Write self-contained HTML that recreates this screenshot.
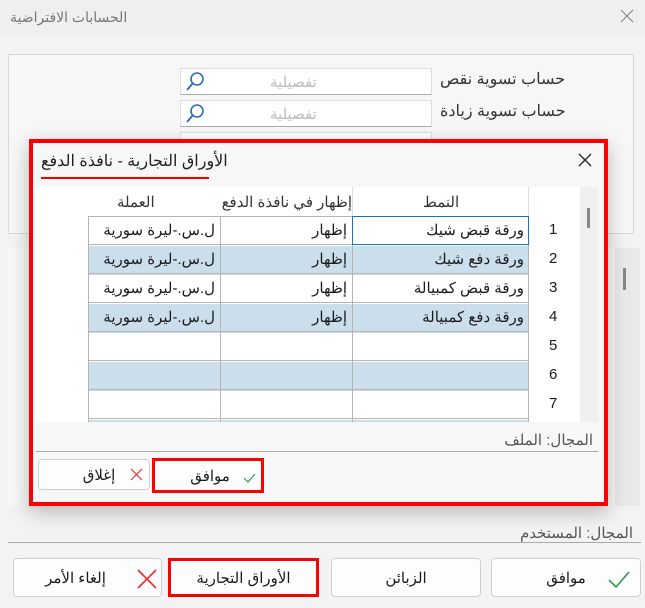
<!DOCTYPE html>
<html><head><meta charset="utf-8"><style>
*{box-sizing:border-box;margin:0;padding:0}
body{width:645px;height:608px;overflow:hidden;background:#f3f3f3;font-family:"Liberation Sans","Noto Sans CJK SC",sans-serif;position:relative;font-size:15px;color:#1a1a1a}
.a{position:absolute}
.t{direction:rtl;white-space:nowrap}
.btn{position:absolute;background:#fdfdfd;border:1px solid #cfcfcf;border-radius:4px;display:flex;align-items:center;justify-content:center;font-size:15px;direction:rtl}
</style></head><body>
<div class="a" style="left:0;top:0;width:645px;height:36px;background:#efefef"></div>
<div class="a t" style="left:10px;top:9px;font-size:14px;color:#777">الحسابات الافتراضية</div>
<svg class="a" style="left:620px;top:9px" width="14" height="14"><path d="M1 1L13 13M13 1L1 13" stroke="#888" stroke-width="1.2"/></svg>
<div class="a" style="left:8px;top:54px;width:626px;height:180px;border:1px solid #d8d8d8;background:#f7f7f7"></div>
<div class="a t" style="left:440px;top:69px;font-size:16px;color:#333">حساب تسوية نقص</div>
<div class="a t" style="left:440px;top:101px;font-size:16px;color:#333">حساب تسوية زيادة</div>
<div class="a" style="left:180px;top:68px;width:252px;height:27px;background:#fff;border:1px solid #ddd;border-bottom-color:#aaa"></div>
<div class="a" style="left:180px;top:100px;width:252px;height:27px;background:#fff;border:1px solid #ddd;border-bottom-color:#aaa"></div>
<div class="a" style="left:180px;top:132px;width:252px;height:10px;background:#fff;border:1px solid #ddd"></div>
<div class="a t" style="left:270px;top:73px;color:#bbb">تفصيلية</div>
<div class="a t" style="left:270px;top:105px;color:#bbb">تفصيلية</div>
<svg class="a" style="left:185px;top:71px" width="22" height="22"><circle cx="12" cy="8" r="6" fill="none" stroke="#2a6fb5" stroke-width="1.6"/><path d="M8 12L2 19" stroke="#2a6fb5" stroke-width="1.8"/></svg>
<svg class="a" style="left:185px;top:103px" width="22" height="22"><circle cx="12" cy="8" r="6" fill="none" stroke="#2a6fb5" stroke-width="1.6"/><path d="M8 12L2 19" stroke="#2a6fb5" stroke-width="1.8"/></svg>
<div class="a" style="left:8px;top:248px;width:632px;height:258px;background:#f7f7f7"></div>
<div class="a" style="left:615px;top:248px;width:25px;height:258px;background:#e9e9e9"></div>
<div class="a" style="left:623px;top:268px;width:3px;height:22px;background:#888"></div>

<div class="a" style="left:29px;top:139px;width:579px;height:367px;border:4px solid #f00;background:#f7f7f7;box-shadow:0 6px 18px rgba(0,0,0,.25)"></div>
<div class="a t" style="left:41px;top:151px;font-size:16px;color:#222">الأوراق التجارية - نافذة الدفع</div>
<div class="a" style="left:41px;top:177px;width:168px;height:2px;background:#e00"></div>
<svg class="a" style="left:578px;top:153px" width="14" height="14"><path d="M1 1L13 13M13 1L1 13" stroke="#222" stroke-width="1.3"/></svg>
<div class="a" style="left:36px;top:187px;width:562px;height:235px;background:#fff"></div>
<div class="a" style="left:580px;top:187px;width:18px;height:235px;background:#f0f0f0"></div>
<div class="a" style="left:587px;top:208px;width:3px;height:20px;background:#888"></div>
<div class="a t" style="left:117px;top:193px;color:#333">العملة</div>
<div class="a" style="left:221px;top:193px;width:131px;overflow:hidden"><div class="t" style="color:#333;text-align:right;width:131px">إظهار في نافذة الدفع</div></div>
<div class="a t" style="left:423px;top:193px;color:#333">النمط</div>
<div class="a" style="left:352px;top:187px;width:1px;height:30px;background:#ddd"></div>
<div class="a" style="left:528px;top:187px;width:1px;height:30px;background:#ddd"></div>
<div class="a" style="left:88px;top:216px;width:441px;height:206px;border-left:1px solid #b5b5b5;border-top:1px solid #b5b5b5;overflow:hidden">
<div class="a" style="left:0;top:29px;width:440px;height:29px;background:#cadeec"></div>
<div class="a" style="left:0;top:87px;width:440px;height:29px;background:#cadeec"></div>
<div class="a" style="left:0;top:145px;width:440px;height:29px;background:#cadeec"></div>
<div class="a" style="left:0;top:203px;width:440px;height:29px;background:#cadeec"></div>
</div>
<div class="a" style="left:88px;top:216px;width:441px;height:206px;overflow:hidden">
<div class="a" style="left:0;top:28px;width:441px;height:1px;background:#b5b5b5"></div>
<div class="a" style="left:0;top:57px;width:441px;height:1px;background:#b5b5b5"></div>
<div class="a" style="left:0;top:86px;width:441px;height:1px;background:#b5b5b5"></div>
<div class="a" style="left:0;top:115px;width:441px;height:1px;background:#b5b5b5"></div>
<div class="a" style="left:0;top:144px;width:441px;height:1px;background:#b5b5b5"></div>
<div class="a" style="left:0;top:173px;width:441px;height:1px;background:#b5b5b5"></div>
<div class="a" style="left:0;top:202px;width:441px;height:1px;background:#b5b5b5"></div>
<div class="a" style="left:132px;top:0;width:1px;height:206px;background:#b5b5b5"></div>
<div class="a" style="left:264px;top:0;width:1px;height:206px;background:#b5b5b5"></div>
<div class="a" style="left:440px;top:0;width:1px;height:206px;background:#b5b5b5"></div>
</div>
<div class="a" style="left:352px;top:216px;width:177px;height:29px;border:1px solid #1a73c8"></div>
<div class="a t" style="right:121px;top:221px">ورقة قبض شيك</div>
<div class="a t" style="right:121px;top:250px">ورقة دفع شيك</div>
<div class="a t" style="right:121px;top:279px">ورقة قبض كمبيالة</div>
<div class="a t" style="right:121px;top:308px">ورقة دفع كمبيالة</div>
<div class="a t" style="right:298px;top:221px">إظهار</div>
<div class="a t" style="right:298px;top:250px">إظهار</div>
<div class="a t" style="right:298px;top:279px">إظهار</div>
<div class="a t" style="right:298px;top:308px">إظهار</div>
<div class="a t" style="right:430px;top:221px">ل.س.-ليرة سورية</div>
<div class="a t" style="right:430px;top:250px">ل.س.-ليرة سورية</div>
<div class="a t" style="right:430px;top:279px">ل.س.-ليرة سورية</div>
<div class="a t" style="right:430px;top:308px">ل.س.-ليرة سورية</div>
<div class="a" style="left:549px;top:221px">1</div>
<div class="a" style="left:549px;top:250px">2</div>
<div class="a" style="left:549px;top:279px">3</div>
<div class="a" style="left:549px;top:308px">4</div>
<div class="a" style="left:549px;top:337px">5</div>
<div class="a" style="left:549px;top:366px">6</div>
<div class="a" style="left:549px;top:395px">7</div>
<div class="a t" style="right:52px;top:431px;color:#555">المجال: الملف</div>
<div class="a" style="left:36px;top:451px;width:562px;height:1px;background:#aaa"></div>
<div class="btn" style="left:38px;top:459px;width:112px;height:31px;padding-left:10px">إغلاق</div>
<svg class="a" style="left:130px;top:468px" width="13" height="13"><path d="M1 1L12 12M12 1L1 12" stroke="#e03030" stroke-width="1.2"/></svg>
<div class="btn" style="left:152px;top:458px;width:112px;height:35px;border:3px solid #f00;border-radius:0;padding-left:4px">موافق</div>
<svg class="a" style="left:243px;top:472px" width="13" height="11"><path d="M1 6L5 10L12 2" fill="none" stroke="#2e9a4a" stroke-width="1.2"/></svg>

<div class="a t" style="right:12px;top:524px;font-size:15px;color:#555">المجال: المستخدم</div>
<div class="a" style="left:8px;top:542px;width:633px;height:1px;background:#aaa"></div>
<div class="btn" style="left:491px;top:558px;width:150px;height:39px">موافق</div>
<svg class="a" style="left:607px;top:570px" width="24" height="20"><path d="M2 10L9 17L22 2" fill="none" stroke="#2e9a4a" stroke-width="1.6"/></svg>
<div class="btn" style="left:331px;top:558px;width:150px;height:39px">الزبائن</div>
<div class="btn" style="left:168px;top:558px;width:151px;height:39px;border:3px solid #f00;border-radius:0">الأوراق التجارية</div>
<div class="btn" style="left:13px;top:558px;width:149px;height:39px;padding-right:24px">إلغاء الأمر</div>
<svg class="a" style="left:136px;top:568px" width="22" height="22"><path d="M2 2L20 20M20 2L2 20" stroke="#e03030" stroke-width="1.6"/></svg>
</body></html>
